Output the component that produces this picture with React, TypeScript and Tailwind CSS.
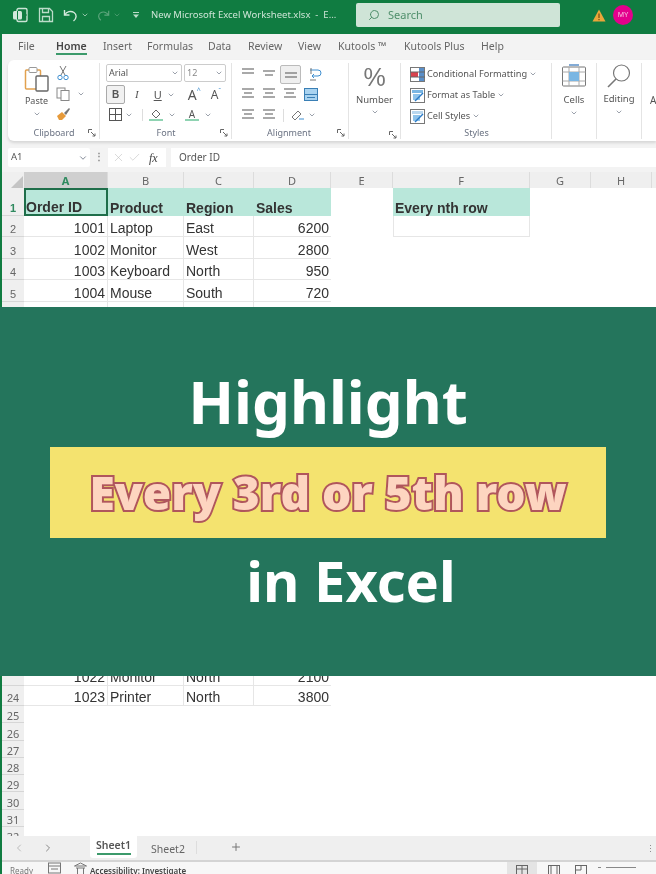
import React from 'react';
import { ChevronDown, ChevronLeft, ChevronRight, Plus, Search, X, Check } from 'lucide-react';

const columns = [
  { name: 'A', w: 'w-[84px]' },
  { name: 'B', w: 'w-[76px]' },
  { name: 'C', w: 'w-[70px]' },
  { name: 'D', w: 'w-[77px]' },
  { name: 'E', w: 'w-[62px]' },
  { name: 'F', w: 'w-[137px]' },
  { name: 'G', w: 'w-[61px]' },
  { name: 'H', w: 'w-[61px]' },
];

const topRows = [
  { n: 2, h: 'h-[21px]', id: '1001', product: 'Laptop', region: 'East', sales: '6200' },
  { n: 3, h: 'h-[22px]', id: '1002', product: 'Monitor', region: 'West', sales: '2800' },
  { n: 4, h: 'h-[21px]', id: '1003', product: 'Keyboard', region: 'North', sales: '950' },
  { n: 5, h: 'h-[22px]', id: '1004', product: 'Mouse', region: 'South', sales: '720' },
];

const tabs = ['File', 'Home', 'Insert', 'Formulas', 'Data', 'Review', 'View', 'Kutools ™', 'Kutools Plus', 'Help'];
const tabWidths = ['w-[38px]', 'w-[47px]', 'w-[44px]', 'w-[61px]', 'w-[40px]', 'w-[50px]', 'w-[40px]', 'w-[66px]', 'w-[77px]', 'w-[40px]'];

const Chev = ({ className = '' }: { className?: string }) => (
  <ChevronDown size={8} strokeWidth={2} className={`text-gray-500 ${className}`} />
);

const Lines = ({ widths, y = 0 }: { widths: number[]; y?: number }) => (
  <svg width="14" height="14" viewBox="0 0 14 14" stroke="#555" strokeWidth="1.2">
    {widths.map((w, i) => (
      <line key={i} x1={(14 - w) / 2} x2={(14 + w) / 2} y1={2 + y + i * 4} y2={2 + y + i * 4} />
    ))}
  </svg>
);

const StyleIcon = ({ top }: { top: string }) => (
  <svg width="15" height="15" viewBox="0 0 15 15">
    <rect x="0.5" y="0.5" width="14" height="14" fill="#fff" stroke="#777" />
    <rect x="2" y="2" width="11" height="3" fill={top} />
    <rect x="3" y="6" width="7" height="6" fill="#8fc3ea" />
    <path d="M5 13 L13 5" stroke="#2b7cc9" strokeWidth="1.5" />
  </svg>
);

const GroupLabel = ({ children }: { children: React.ReactNode }) => (
  <div className="text-[9px] leading-[12px] text-gray-500 text-center">{children}</div>
);

const Launcher = () => (
  <svg width="8" height="8" viewBox="0 0 8 8" fill="none" stroke="#666">
    <path d="M0.5 4V0.5H4" />
    <path d="M3 3L7 7M7 4.5V7H4.5" />
  </svg>
);

const TitleBar = () => (
  <div className="h-[34px] bg-[#107c41] flex items-center pl-[12px] pb-[4px] text-white">
    <svg width="16" height="16" viewBox="0 0 16 16" className="opacity-90">
      <rect x="5" y="1.5" width="10" height="13" rx="1.5" fill="none" stroke="#dff0e6" strokeWidth="1.4" />
      <rect x="1" y="4" width="9" height="8.5" rx="1.5" fill="#e8f4ed" />
      <path d="M5.5 4v8.5M10 8h5" stroke="#107c41" />
    </svg>
    <svg width="16" height="16" viewBox="0 0 16 16" fill="none" stroke="#bcdcc9" strokeWidth="1.3" className="ml-[10px]">
      <path d="M1.5 1.5h10l3 3v10h-13z" />
      <path d="M4.5 1.5v4h6v-4M4.5 14.5v-5h7v5" />
    </svg>
    <svg width="15" height="15" viewBox="0 0 15 15" fill="none" stroke="#d5eadd" strokeWidth="1.4" className="ml-[9px]">
      <path d="M1.5 2v5h5" />
      <path d="M1.8 7C3.5 3.5 8 2.5 11 4.5c3 2 2.8 6-0.5 8.5" />
    </svg>
    <ChevronDown size={8} className="ml-[3px] text-[#cfe6d8]" />
    <svg width="13" height="13" viewBox="0 0 15 15" fill="none" stroke="#5fa67e" strokeWidth="1.3" className="ml-[8px]">
      <path d="M13.5 2v5h-5" />
      <path d="M13.2 7C11.5 3.5 7 2.5 4 4.5c-3 2-2.8 6 0.5 8.5" />
    </svg>
    <ChevronDown size={8} className="ml-[3px] text-[#5fa67e]" />
    <svg width="8" height="8" viewBox="0 0 8 8" className="ml-[11px]" fill="#bcdcc9">
      <rect x="1" y="1" width="6" height="1" />
      <path d="M1 3.5h6L4 7z" />
    </svg>
    <div className="ml-[11px] w-[205px] text-[9.5px] text-[#cde4d6] whitespace-nowrap">New Microsoft Excel Worksheet.xlsx&nbsp; -&nbsp; E...</div>
    <div className="w-[204px] h-[24px] bg-[#cfe4d7] rounded-[2px] flex items-center pl-[12px] text-[#4f8f6b]">
      <Search size={12} className="-scale-x-100" />
      <span className="ml-[8px] text-[11px]">Search</span>
    </div>
    <svg width="14" height="13" viewBox="0 0 14 13" className="ml-[32px]">
      <path d="M7 0.5L13.5 12.5H0.5z" fill="#eaa63a" />
      <rect x="6.4" y="4.5" width="1.2" height="4.5" fill="#7a4d10" />
      <rect x="6.4" y="10" width="1.2" height="1.2" fill="#7a4d10" />
    </svg>
    <div className="ml-[7px] w-[20px] h-[20px] rounded-full bg-[#e3008c] text-[7px] flex items-center justify-center text-[#f6c0df]">MY</div>
  </div>
);

const TabRow = () => (
  <div className="h-[26px] flex items-center pl-[16px] text-[10.5px] text-[#666]">
    {tabs.map((t, i) => (
      <div key={t} className={`${tabWidths[i]} shrink-0 whitespace-nowrap`}>
        {t === 'Home' ? (
          <span className="inline-block font-semibold text-[#444] border-b-2 border-[#3c9a6b] leading-[14px] -mb-[2px]">{t}</span>
        ) : t}
      </div>
    ))}
  </div>
);

const Ribbon = () => (
  <div className="ml-[6px] h-[81px] bg-white rounded-l-[6px] flex shadow-[0_2px_3px_rgba(0,0,0,0.12)] overflow-hidden text-[#555]">
    <div className="w-[92px] shrink-0 border-r border-[#e4e4e4] mt-[3px] mb-[2px] flex flex-col">
      <div className="flex-1 flex pl-[15px]">
        <div className="w-[27px] flex flex-col items-center pt-[3px]">
          <svg width="26" height="26" viewBox="0 0 26 26" fill="none">
            <rect x="1.5" y="4" width="15" height="19" rx="1" stroke="#e2a14f" strokeWidth="1.5" />
            <rect x="5" y="1.5" width="8" height="5" rx="1" stroke="#999" fill="#fff" />
            <rect x="12" y="10" width="12" height="15" rx="1" stroke="#666" strokeWidth="1.4" fill="#fff" />
          </svg>
          <div className="text-[9px] leading-[12px] mt-[3px]">Paste</div>
          <Chev className="mt-[3px]" />
        </div>
        <div className="ml-[6px] flex flex-col gap-[6px] pt-[2px]">
          <svg width="14" height="16" viewBox="0 0 14 16" fill="none" stroke="#777" strokeWidth="1">
            <path d="M4 1l5 9M10 1L5 10" />
            <circle cx="4" cy="12.5" r="2.2" stroke="#3f8fd0" />
            <circle cx="10" cy="12.5" r="2.2" stroke="#3f8fd0" />
          </svg>
          <div className="flex items-center gap-[6px]">
            <svg width="15" height="14" viewBox="0 0 15 14" fill="none" stroke="#888">
              <rect x="1" y="1" width="8" height="10" />
              <rect x="5" y="3.5" width="8" height="10" fill="#fff" />
            </svg>
            <Chev />
          </div>
          <svg width="15" height="14" viewBox="0 0 15 14">
            <path d="M1 9l5-4 4 4-4 4H3z" fill="#e69a3a" />
            <path d="M8 6l5-5 1 1-4 6z" fill="#777" />
          </svg>
        </div>
      </div>
      <div className="flex items-center">
        <div className="flex-1 pl-[12px]"><GroupLabel>Clipboard</GroupLabel></div>
        <div className="mr-[3px]"><Launcher /></div>
      </div>
    </div>

    <div className="w-[132px] shrink-0 border-r border-[#e4e4e4] mt-[3px] mb-[2px] flex flex-col pl-[6px]">
      <div className="flex gap-[2px] mt-[1px]">
        <div className="w-[76px] h-[18px] border border-[#ccc] rounded-[2px] flex items-center justify-between px-[2px] text-[9px]">Arial<Chev /></div>
        <div className="w-[42px] h-[18px] border border-[#ccc] rounded-[2px] flex items-center justify-between px-[2px] text-[9px] text-[#888]">12<Chev /></div>
      </div>
      <div className="flex items-center mt-[3px] text-[11px] leading-none">
        <div className="w-[19px] h-[19px] border border-[#aaa] bg-[#f1f1f1] rounded-[2px] flex items-center justify-center font-bold text-[10px] font-['Liberation_Sans',sans-serif]">B</div>
        <span className="ml-[10px] italic font-['Liberation_Serif',serif]">I</span>
        <span className="ml-[15px] underline">U</span>
        <Chev className="ml-[5px]" />
        <span className="ml-[13px] text-[14px]">A</span>
        <span className="text-[7px] text-[#3f8fd0] -mt-[8px]">^</span>
        <span className="ml-[10px] text-[12px]">A</span>
        <span className="text-[7px] text-[#3f8fd0] -mt-[8px]">ˇ</span>
      </div>
      <div className="flex items-center mt-[4px]">
        <svg width="13" height="13" viewBox="0 0 13 13" fill="none" stroke="#555" className="ml-[3px]">
          <rect x="0.5" y="0.5" width="12" height="12" />
          <path d="M6.5 0.5v12M0.5 6.5h12" />
        </svg>
        <Chev className="ml-[3px]" />
        <div className="ml-[9px] w-px h-[12px] bg-[#ddd]" />
        <div className="ml-[6px] w-[14px] flex flex-col items-center">
          <svg width="12" height="10" viewBox="0 0 12 10" fill="none" stroke="#666">
            <path d="M6 1l4 4-4 4-4-4z" />
          </svg>
          <div className="w-[14px] h-[2px] bg-[#8fd3b2]" />
        </div>
        <Chev className="ml-[5px]" />
        <div className="ml-[9px] w-[14px] flex flex-col items-center text-[10px] leading-[10px]">
          A
          <div className="w-[14px] h-[2px] bg-[#8fd3b2]" />
        </div>
        <Chev className="ml-[5px]" />
      </div>
      <div className="flex items-center mt-auto">
        <div className="flex-1 pl-[6px]"><GroupLabel>Font</GroupLabel></div>
        <div className="mr-[3px]"><Launcher /></div>
      </div>
    </div>

    <div className="w-[117px] shrink-0 border-r border-[#e4e4e4] mt-[3px] mb-[2px] flex flex-col pl-[9px]">
      <div className="flex items-center gap-[7px] mt-[2px] h-[18px]">
        <Lines widths={[12, 12]} />
        <Lines widths={[12, 8]} y={2} />
        <div className="w-[21px] h-[19px] bg-[#efefef] border border-[#bbb] rounded-[2px] flex items-center justify-center -mx-[3px]">
          <Lines widths={[12, 12]} y={4} />
        </div>
        <svg width="14" height="15" viewBox="0 0 14 15" fill="none" stroke="#777" className="ml-[3px]">
          <path d="M2 3h8a2 2 0 010 6H4" stroke="#3f8fd0" />
          <path d="M6 7L4 9l2 2" stroke="#3f8fd0" />
          <path d="M3 1v6M2 13h6" />
        </svg>
      </div>
      <div className="flex items-center gap-[7px] mt-[4px]">
        <Lines widths={[12, 8, 12]} />
        <Lines widths={[12, 8, 12]} />
        <Lines widths={[12, 8, 12]} />
        <svg width="14" height="13" viewBox="0 0 14 13" fill="#a9d3f0" stroke="#3a7fb5">
          <rect x="0.5" y="0.5" width="13" height="12" />
          <path d="M0.5 6.5h13M3 9.5h8" fill="none" />
        </svg>
      </div>
      <div className="flex items-center gap-[7px] mt-[7px]">
        <Lines widths={[12, 8, 12]} />
        <Lines widths={[12, 8, 12]} />
        <div className="w-px h-[13px] bg-[#ddd]" />
        <svg width="14" height="13" viewBox="0 0 14 13" fill="none" stroke="#777">
          <path d="M1 8l6-6 3 3-6 6z" />
          <path d="M8 10h5" stroke="#3f8fd0" />
        </svg>
        <Chev className="-ml-[4px]" />
      </div>
      <div className="flex items-center mt-auto">
        <div className="flex-1"><GroupLabel>Alignment</GroupLabel></div>
        <div className="mr-[3px]"><Launcher /></div>
      </div>
    </div>

    <div className="w-[52px] shrink-0 border-r border-[#e4e4e4] mt-[3px] mb-[2px] flex flex-col items-center">
      <div className="text-[25px] leading-[29px] text-[#777] font-['Liberation_Sans',sans-serif]">%</div>
      <div className="text-[9.5px] leading-[12px] mt-[2px]">Number</div>
      <Chev className="mt-[2px]" />
      <div className="mt-auto self-end mr-[3px]"><Launcher /></div>
    </div>

    <div className="w-[151px] shrink-0 border-r border-[#e4e4e4] mt-[3px] mb-[2px] flex flex-col pl-[9px] text-[9.2px]">
      <div className="flex items-center gap-[2px] mt-[2px] h-[18px]">
        <svg width="15" height="15" viewBox="0 0 15 15">
          <rect x="0.5" y="0.5" width="14" height="14" fill="#fff" stroke="#777" />
          <rect x="1" y="5" width="7" height="5" fill="#d8434e" />
          <rect x="9" y="1" width="5" height="13" fill="#5a8fc9" />
          <path d="M0 5h15M0 10h15" stroke="#666" />
        </svg>
        Conditional Formatting <Chev />
      </div>
      <div className="flex items-center gap-[2px] mt-[3px] h-[18px]"><StyleIcon top="#7ab6e3" />Format as Table <Chev /></div>
      <div className="flex items-center gap-[2px] mt-[3px] h-[18px]"><StyleIcon top="#b9d7ee" />Cell Styles <Chev /></div>
      <div className="mt-auto pr-[8px]"><GroupLabel>Styles</GroupLabel></div>
    </div>

    <div className="w-[45px] shrink-0 border-r border-[#e4e4e4] mt-[3px] mb-[2px] flex flex-col items-center">
      <svg width="24" height="23" viewBox="0 0 24 23" fill="none" stroke="#777" className="mt-[1px]">
        <rect x="0.5" y="3" width="23" height="19" rx="1" />
        <path d="M7 3v19M17 3v19M0.5 8h23M0.5 17h23" stroke="#aaa" />
        <rect x="7" y="8" width="10" height="9" fill="#7ab6e3" stroke="none" />
        <path d="M7 1h10" stroke="#5a8fc9" strokeWidth="1.5" />
      </svg>
      <div className="text-[9.5px] leading-[12px] mt-[7px]">Cells</div>
      <Chev className="mt-[3px]" />
    </div>

    <div className="w-[45px] shrink-0 border-r border-[#e4e4e4] mt-[3px] mb-[2px] flex flex-col items-center">
      <svg width="26" height="25" viewBox="0 0 26 25" fill="none" stroke="#777" strokeWidth="1.2">
        <circle cx="15.5" cy="10" r="8" />
        <path d="M10 16L2 24" strokeWidth="1.6" />
      </svg>
      <div className="text-[9.5px] leading-[12px] mt-[5px]">Editing</div>
      <Chev className="mt-[3px]" />
    </div>

    <div className="pl-[8px] pt-[34px] text-[10px] leading-[12px]">A</div>
  </div>
);

const FormulaBar = () => (
  <div className="h-[19px] mt-[7px] ml-[6px] flex text-[#555] text-[9.5px]">
    <div className="w-[82px] bg-white flex items-center justify-between pl-[3px] pr-[2px] rounded-[2px] shrink-0">
      A1<Chev className="w-[10px] h-[10px]" />
    </div>
    <div className="w-[18px] flex items-center justify-center text-[#888] font-bold shrink-0">⋮</div>
    <div className="w-[58px] bg-white flex items-center pl-[4px] gap-[3px] shrink-0">
      <X size={13} strokeWidth={1} className="text-[#bbb]" />
      <Check size={13} strokeWidth={1} className="text-[#bbb]" />
      <span className="ml-[5px] italic text-[12px] leading-none font-['Liberation_Serif',serif] text-[#444]">fx</span>
    </div>
    <div className="ml-[5px] flex-1 bg-white flex items-center pl-[8px] text-[10px]">Order ID</div>
  </div>
);

const RowNum = ({ n, h, active }: { n: number; h: string; active?: boolean }) => (
  <div className={`w-[22px] ${h} shrink-0 bg-[#efefef] border-b border-[#d6d6d6] flex items-end justify-center text-[11px] leading-[13px] ${active ? 'text-[#2f8a5f]' : 'text-[#666]'}`}>
    {n}
  </div>
);

const cellText = "font-['Liberation_Sans',sans-serif] text-[14px] text-[#333] leading-[16px]";

const DataRow = ({ r }: { r: (typeof topRows)[number] }) => (
  <div className={`flex ${r.h} ${cellText}`}>
    <RowNum n={r.n} h={r.h} />
    <div className="w-[84px] border-r border-b border-[#e6e6e6] text-right pr-[2px] flex items-end justify-end">{r.id}</div>
    <div className="w-[76px] border-r border-b border-[#e6e6e6] pl-[2px] flex items-end">{r.product}</div>
    <div className="w-[70px] border-r border-b border-[#e6e6e6] pl-[2px] flex items-end">{r.region}</div>
    <div className="w-[77px] border-b border-[#e6e6e6] pr-[2px] flex items-end justify-end">{r.sales}</div>
    {r.n === 2 && (
      <>
        <div className="w-[62px]" />
        <div className="w-[137px] border-x border-b border-[#e6e6e6]" />
      </>
    )}
  </div>
);

const Banner = () => (
  <div className="h-[369px] w-[656px] -ml-[2px] bg-[#24755c] shrink-0 flex flex-col items-center font-['Noto_Sans',sans-serif] font-bold">
    <div className="mt-[54px] h-[86px] text-white text-[60px] leading-[80px]">Highlight</div>
    <div className="w-[556px] h-[91px] bg-[#f4e36f] flex items-center justify-center text-[46px] font-black text-[#fdd5c0] [-webkit-text-stroke:4px_#b0565c] [paint-order:stroke_fill] whitespace-nowrap">
      Every 3rd or 5th row
    </div>
    <div className="mt-[4px] ml-[46px] text-white text-[56px] leading-[76px]">in Excel</div>
  </div>
);

const Sheet = () => (
  <div className="flex-1 min-h-0 flex flex-col bg-white overflow-x-visible overflow-y-clip">
    <div className="h-[16px] flex shrink-0 bg-[#efefef] text-[11px] leading-[17px] text-[#666]">
      <div className="w-[22px] flex items-end justify-end">
        <div className="w-0 h-0 border-l-[12px] border-b-[12px] border-l-transparent border-b-[#c4c4c4] mr-[1px]" />
      </div>
      {columns.map((c) => (
        <div key={c.name} className={`${c.w} text-center border-r border-[#dcdcdc] ${c.name === 'A' ? 'bg-[#cfcfcf] text-[#2f8a5f] font-bold' : ''}`}>{c.name}</div>
      ))}
    </div>

    <div className={`flex h-[28px] shrink-0 font-bold ${cellText}`}>
      <RowNum n={1} h="h-[28px]" active />
      <div className="w-[84px] bg-[#b9e7da] border-2 border-[#1f6e4a] flex items-end leading-[14px]">Order ID</div>
      <div className="w-[76px] bg-[#b9e7da] pl-[2px] flex items-end">Product</div>
      <div className="w-[70px] bg-[#b9e7da] pl-[2px] flex items-end">Region</div>
      <div className="w-[77px] bg-[#b9e7da] pl-[2px] flex items-end">Sales</div>
      <div className="w-[62px]" />
      <div className="w-[137px] bg-[#b9e7da] pl-[2px] flex items-end">Every nth row</div>
    </div>

    {topRows.map((r) => <DataRow key={r.n} r={r} />)}

    <div className="h-[5px] shrink-0 flex">
      <div className="w-[22px] bg-[#efefef]" />
      <div className="w-[84px] border-r border-[#e6e6e6]" />
      <div className="w-[76px] border-r border-[#e6e6e6]" />
      <div className="w-[70px] border-r border-[#e6e6e6]" />
      <div className="w-[77px]" />
    </div>

    <Banner />

    <div className={`flex h-[10px] shrink-0 overflow-hidden items-end ${cellText}`}>
      <div className="w-[22px] h-[10px] bg-[#efefef] border-b border-[#d6d6d6]" />
      <div className="w-[84px] h-[10px] border-r border-b border-[#e6e6e6] flex items-end justify-end pr-[2px]">1022</div>
      <div className="w-[76px] h-[10px] border-r border-b border-[#e6e6e6] flex items-end pl-[2px]">Monitor</div>
      <div className="w-[70px] h-[10px] border-r border-b border-[#e6e6e6] flex items-end pl-[2px]">North</div>
      <div className="w-[77px] h-[10px] border-b border-[#e6e6e6] flex items-end justify-end pr-[2px]">2100</div>
    </div>

    <div className={`flex h-[20px] shrink-0 ${cellText}`}>
      <RowNum n={24} h="h-[20px]" />
      <div className="w-[84px] border-r border-b border-[#e6e6e6] flex items-end justify-end pr-[2px]">1023</div>
      <div className="w-[76px] border-r border-b border-[#e6e6e6] flex items-end pl-[2px]">Printer</div>
      <div className="w-[70px] border-r border-b border-[#e6e6e6] flex items-end pl-[2px]">North</div>
      <div className="w-[77px] border-b border-[#e6e6e6] flex items-end justify-end pr-[2px]">3800</div>
    </div>

    {[25, 26, 27, 28, 29, 30, 31, 32].map((n) => (
      <RowNum key={n} n={n} h="h-[17.3px]" />
    ))}
  </div>
);

const SheetTabs = () => (
  <div className="h-[26px] shrink-0 bg-[#efefef] flex items-start text-[10.5px] text-[#666] border-b-2 border-[#d4d4d4] relative">
    <ChevronLeft size={12} className="ml-[11px] mt-[6px] text-[#bbb]" />
    <ChevronRight size={12} className="ml-[17px] mt-[6px] text-[#888]" />
    <div className="ml-[36px] w-[47px] h-[24px] -mt-[2px] bg-white rounded-b-[3px] flex flex-col items-center font-semibold text-[#555] pt-[4px]">
      <span className="leading-[14px]">Sheet1</span>
      <div className="w-[34px] h-[2px] bg-[#3c9a6b] mt-[1px]" />
    </div>
    <div className="ml-[14px] mt-[6px] leading-[14px]">Sheet2</div>
    <div className="ml-[11px] mt-[5px] w-px h-[13px] bg-[#ddd]" />
    <Plus size={12} className="ml-[33px] mt-[5px] text-[#777]" />
    <div className="absolute right-[1px] top-[8px] text-[9px] text-[#888] leading-none">⋮</div>
  </div>
);

const StatusBar = () => (
  <div className="h-[12px] shrink-0 bg-[#f7f7f7] flex items-start text-[8px] leading-[17px] text-[#777] overflow-hidden">
    <span className="ml-[8px]">Ready</span>
    <svg width="13" height="12" viewBox="0 0 13 12" fill="none" stroke="#777" className="ml-[15px]">
      <rect x="0.5" y="1" width="12" height="10" />
      <path d="M0.5 4h12M3 7h7" />
    </svg>
    <svg width="13" height="12" viewBox="0 0 13 12" fill="none" stroke="#777" className="ml-[13px]">
      <path d="M6.5 1l6 3H.5zM2 6h9M3.5 6v6M9.5 6v6" />
    </svg>
    <span className="ml-[3px] font-semibold text-[#444]">Accessibility: Investigate</span>
    <div className="ml-[321px] w-[30px] h-[12px] bg-[#e4e4e4] flex justify-center pt-[3px]">
      <svg width="12" height="9" viewBox="0 0 12 9" fill="none" stroke="#666"><rect x="0.5" y="0.5" width="11" height="10" /><path d="M0.5 4h11M6 0v9" /></svg>
    </div>
    <div className="ml-[11px] pt-[3px]">
      <svg width="12" height="9" viewBox="0 0 12 9" fill="none" stroke="#666"><rect x="0.5" y="0.5" width="11" height="10" /><path d="M3 0v9M9 0v9" /></svg>
    </div>
    <div className="ml-[15px] pt-[3px]">
      <svg width="12" height="9" viewBox="0 0 12 9" fill="none" stroke="#666"><rect x="0.5" y="0.5" width="11" height="10" /><path d="M6 0v5H0" /></svg>
    </div>
    <div className="ml-[11px] mt-[5px] w-[3px] h-px bg-[#888]" />
    <div className="ml-[5px] mt-[5px] w-[30px] h-px bg-[#888]" />
  </div>
);

export default function App() {
  return (
    <div className="w-[656px] h-[874px] overflow-hidden bg-[#107c41] font-['Noto_Sans',sans-serif] blur-[0.4px]">
      <TitleBar />
      <div className="h-[840px] ml-[2px] bg-[#f3f3f3] flex flex-col">
        <TabRow />
        <Ribbon />
        <FormulaBar />
        <div className="h-[5px] shrink-0" />
        <Sheet />
        <SheetTabs />
        <StatusBar />
      </div>
    </div>
  );
}
